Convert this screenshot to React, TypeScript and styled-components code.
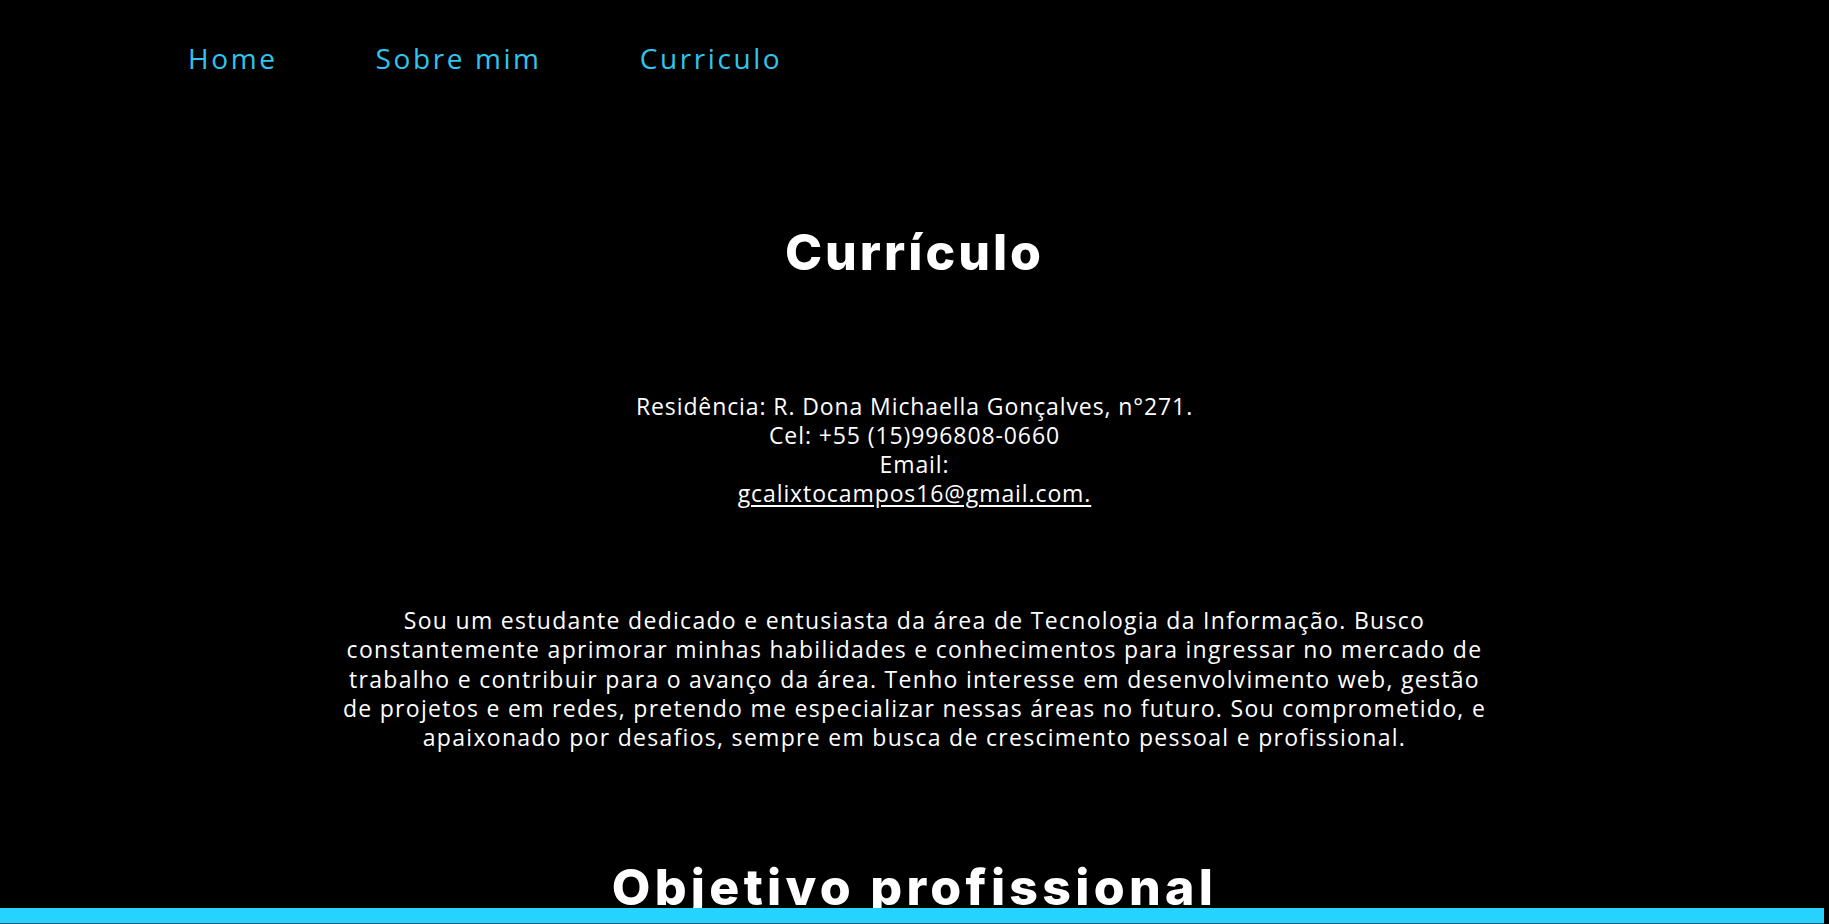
import React from "react";
import styled, { createGlobalStyle } from "styled-components";

const Global = createGlobalStyle`
  html, body {
    margin: 0;
    padding: 0;
    background: #000;
    color: #fff;
    font-family: "Open Sans", "Noto Sans", sans-serif;
    overflow: hidden;
  }
`;

const Page = styled.div`
  min-height: 924px;
  background: #000;
`;

const Nav = styled.nav`
  display: flex;
  gap: 98px;
  padding: 41px 0 0 188px;
`;

const NavLink = styled.a`
  font-family: "Open Sans", sans-serif;
  font-size: 28px;
  line-height: 34px;
  letter-spacing: 2.6px;
  color: #2ec5ef;
  text-decoration: none;
`;

const Main = styled.main`
  display: flex;
  flex-direction: column;
  align-items: center;
  text-align: center;
`;

const Title = styled.h1<{ $top: number; $spacing: number }>`
  margin: ${(p) => p.$top}px 0 0;
  font-family: "Inter", sans-serif;
  font-weight: 800;
  font-size: 50px;
  line-height: 62px;
  letter-spacing: ${(p) => p.$spacing}px;
  color: #fff;
`;

const Contact = styled.address`
  margin-top: 109px;
  font-style: normal;
  font-size: 23px;
  line-height: 29px;
  letter-spacing: 0.9px;
  display: flex;
  flex-direction: column;
  align-items: center;
`;

const Mail = styled.a`
  color: #fff;
  text-decoration: underline;
  text-underline-offset: 3px;
`;

const About = styled.p`
  margin: 98px 0 0;
  max-width: 1300px;
  font-size: 23px;
  line-height: 29.3px;
  letter-spacing: 1.3px;
`;

const Footer = styled.footer`
  position: fixed;
  left: 0;
  right: 5px;
  bottom: 0;
  height: 15px;
  background: #26d3fe;
  border-bottom: 1px solid #0d5b74;
`;

export default function App() {
  return (
    <Page>
      <Global />
      <Nav>
        <NavLink href="#">Home</NavLink>
        <NavLink href="#">Sobre mim</NavLink>
        <NavLink href="#">Curriculo</NavLink>
      </Nav>
      <Main>
        <Title $top={146} $spacing={3}>Currículo</Title>
        <Contact>
          <span>Residência: R. Dona Michaella Gonçalves, n°271.</span>
          <span>Cel: +55 (15)996808-0660</span>
          <span>Email:</span>
          <Mail href="#">gcalixtocampos16@gmail.com.</Mail>
        </Contact>
        <About>
          Sou um estudante dedicado e entusiasta da área de Tecnologia da Informação. Busco
          <br />
          constantemente aprimorar minhas habilidades e conhecimentos para ingressar no mercado de
          <br />
          trabalho e contribuir para o avanço da área. Tenho interesse em desenvolvimento web, gestão
          <br />
          de projetos e em redes, pretendo me especializar nessas áreas no futuro. Sou comprometido, e
          <br />
          apaixonado por desafios, sempre em busca de crescimento pessoal e profissional.
        </About>
        <Title $top={104} $spacing={4.3}>Objetivo profissional</Title>
      </Main>
      <Footer />
    </Page>
  );
}
